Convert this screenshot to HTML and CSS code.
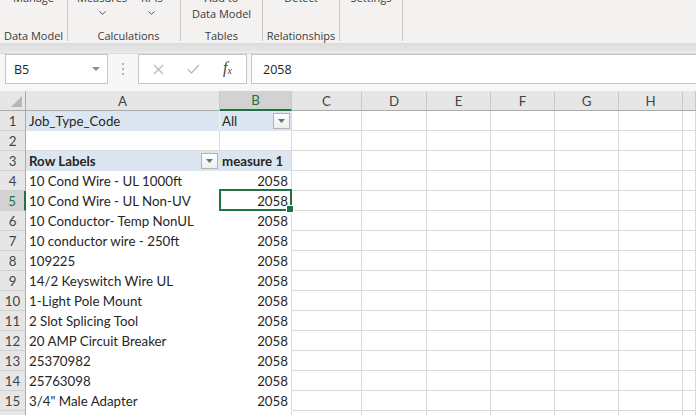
FILE: index.html
```html
<!DOCTYPE html>
<html>
<head>
<meta charset="utf-8">
<link rel="stylesheet" href="styles.css">
</head>
<body>
<div class="ribbon">
  <div class="group g1">
    <div class="btns"><div class="btn"><span>Manage</span></div></div>
    <div class="glabel">Data Model</div>
  </div>
  <div class="group g2">
    <div class="btns">
      <div class="btn"><span>Measures</span><svg class="chev" width="7" height="4" viewBox="0 0 7 4"><path d="M0.5 0.5 L3.5 3.3 L6.5 0.5" fill="none" stroke="#555" stroke-width="1"/></svg></div>
      <div class="btn"><span>KPIs</span><svg class="chev" width="7" height="4" viewBox="0 0 7 4"><path d="M0.5 0.5 L3.5 3.3 L6.5 0.5" fill="none" stroke="#555" stroke-width="1"/></svg></div>
    </div>
    <div class="glabel">Calculations</div>
  </div>
  <div class="group g3">
    <div class="btns"><div class="btn"><span>Add to</span><span>Data Model</span></div></div>
    <div class="glabel">Tables</div>
  </div>
  <div class="group g4">
    <div class="btns"><div class="btn"><span>Detect</span></div></div>
    <div class="glabel">Relationships</div>
  </div>
  <div class="group g5">
    <div class="btns"><div class="btn"><span>Settings</span></div></div>
    <div class="glabel"></div>
  </div>
</div>
<div class="strip"></div>
<div class="fbar">
  <div class="namebox">
    <span>B5</span>
    <svg width="8" height="4" viewBox="0 0 8 4"><path d="M0 0 H8 L4 4 Z" fill="#8a8a8a"/></svg>
  </div>
  <div class="dots"><i></i><i></i><i></i></div>
  <div class="fxbox">
    <svg width="11" height="11" viewBox="0 0 11 11"><path d="M1 1 L10 10 M10 1 L1 10" stroke="#b9b9b9" stroke-width="1.3" fill="none"/></svg>
    <svg width="13" height="10" viewBox="0 0 13 10"><path d="M1 5.5 L4.5 9 L12 1" stroke="#b9b9b9" stroke-width="1.3" fill="none"/></svg>
    <span class="fx">f<sub>x</sub></span>
  </div>
  <div class="finput">2058</div>
</div>
<div class="sheet">
  <div class="row hdr">
    <div class="corner"><svg width="11" height="11" viewBox="0 0 11 11"><path d="M11 0 V11 H0 Z" fill="#b7b7b7"/></svg></div>
    <div class="ch">A</div><div class="ch sel-h">B</div><div class="ch">C</div><div class="ch">D</div><div class="ch">E</div><div class="ch">F</div><div class="ch">G</div><div class="ch">H</div><div class="ch"></div>
  </div>
  <div class="row">
    <div class="rh">1</div><div class="c pv pv-a1">Job_Type_Code</div><div class="c pv pv-b1">All<span class="dd"><svg width="7" height="4" viewBox="0 0 7 4"><path d="M0 0 H7 L3.5 4 Z" fill="#6f6f6f"/></svg></span></div>
    <div class="c"></div><div class="c"></div><div class="c"></div><div class="c"></div><div class="c"></div><div class="c"></div><div class="c"></div>
  </div>
  <div class="row">
    <div class="rh">2</div><div class="c"></div><div class="c"></div>
    <div class="c"></div><div class="c"></div><div class="c"></div><div class="c"></div><div class="c"></div><div class="c"></div><div class="c"></div>
  </div>
  <div class="row">
    <div class="rh">3</div><div class="c pv pv-a3 b">Row Labels<span class="dd"><svg width="7" height="4" viewBox="0 0 7 4"><path d="M0 0 H7 L3.5 4 Z" fill="#6f6f6f"/></svg></span></div><div class="c pv pv-b3 b">measure 1</div>
    <div class="c"></div><div class="c"></div><div class="c"></div><div class="c"></div><div class="c"></div><div class="c"></div><div class="c"></div>
  </div>
  <div class="row">
    <div class="rh">4</div><div class="c pa">10 Cond Wire - UL 1000ft</div><div class="c pb">2058</div>
    <div class="c"></div><div class="c"></div><div class="c"></div><div class="c"></div><div class="c"></div><div class="c"></div><div class="c"></div>
  </div>
  <div class="row">
    <div class="rh sel-r">5</div><div class="c pa">10 Cond Wire - UL Non-UV</div><div class="c pb active">2058</div>
    <div class="c"></div><div class="c"></div><div class="c"></div><div class="c"></div><div class="c"></div><div class="c"></div><div class="c"></div>
  </div>
  <div class="row">
    <div class="rh">6</div><div class="c pa">10 Conductor- Temp NonUL</div><div class="c pb">2058</div>
    <div class="c"></div><div class="c"></div><div class="c"></div><div class="c"></div><div class="c"></div><div class="c"></div><div class="c"></div>
  </div>
  <div class="row">
    <div class="rh">7</div><div class="c pa">10 conductor wire - 250ft</div><div class="c pb">2058</div>
    <div class="c"></div><div class="c"></div><div class="c"></div><div class="c"></div><div class="c"></div><div class="c"></div><div class="c"></div>
  </div>
  <div class="row">
    <div class="rh">8</div><div class="c pa">109225</div><div class="c pb">2058</div>
    <div class="c"></div><div class="c"></div><div class="c"></div><div class="c"></div><div class="c"></div><div class="c"></div><div class="c"></div>
  </div>
  <div class="row">
    <div class="rh">9</div><div class="c pa">14/2 Keyswitch Wire UL</div><div class="c pb">2058</div>
    <div class="c"></div><div class="c"></div><div class="c"></div><div class="c"></div><div class="c"></div><div class="c"></div><div class="c"></div>
  </div>
  <div class="row">
    <div class="rh">10</div><div class="c pa">1-Light Pole Mount</div><div class="c pb">2058</div>
    <div class="c"></div><div class="c"></div><div class="c"></div><div class="c"></div><div class="c"></div><div class="c"></div><div class="c"></div>
  </div>
  <div class="row">
    <div class="rh">11</div><div class="c pa">2 Slot Splicing Tool</div><div class="c pb">2058</div>
    <div class="c"></div><div class="c"></div><div class="c"></div><div class="c"></div><div class="c"></div><div class="c"></div><div class="c"></div>
  </div>
  <div class="row">
    <div class="rh">12</div><div class="c pa">20 AMP Circuit Breaker</div><div class="c pb">2058</div>
    <div class="c"></div><div class="c"></div><div class="c"></div><div class="c"></div><div class="c"></div><div class="c"></div><div class="c"></div>
  </div>
  <div class="row">
    <div class="rh">13</div><div class="c pa">25370982</div><div class="c pb">2058</div>
    <div class="c"></div><div class="c"></div><div class="c"></div><div class="c"></div><div class="c"></div><div class="c"></div><div class="c"></div>
  </div>
  <div class="row">
    <div class="rh">14</div><div class="c pa">25763098</div><div class="c pb">2058</div>
    <div class="c"></div><div class="c"></div><div class="c"></div><div class="c"></div><div class="c"></div><div class="c"></div><div class="c"></div>
  </div>
  <div class="row">
    <div class="rh">15</div><div class="c pa">3/4" Male Adapter</div><div class="c pb">2058</div>
    <div class="c"></div><div class="c"></div><div class="c"></div><div class="c"></div><div class="c"></div><div class="c"></div><div class="c"></div>
  </div>
  <div class="row">
    <div class="rh">16</div><div class="c pa"></div><div class="c pb"></div>
    <div class="c"></div><div class="c"></div><div class="c"></div><div class="c"></div><div class="c"></div><div class="c"></div><div class="c"></div>
  </div>
</div>
</body>
</html>
```
FILE: styles.css
```css
* { box-sizing: border-box; margin: 0; padding: 0; }
html, body { width: 696px; height: 415px; overflow: hidden; background: #ffffff; }
body { font-family: "Open Sans", "Noto Sans", sans-serif; color: #262626; }

/* Ribbon */
.ribbon {
  height: 43px;
  background: #f3f2f1;
  display: flex;
  overflow: hidden;
  font-size: 11px;
  color: #3b3a39;
}
.group {
  display: flex;
  flex-direction: column;
  justify-content: space-between;
  align-items: center;
  height: 51px;
  margin-top: -10px;
  border-right: 1px solid #c8c6c4;
}
.g1 { width: 68px; }
.g2 { width: 113px; padding-left: 9px; align-items: flex-start; }
.g3 { width: 82px; }
.g4 { width: 77px; }
.g5 { width: 63px; }
.btns { display: flex; gap: 14px; }
.btn { display: flex; flex-direction: column; align-items: center; line-height: 16px; }
.chev { margin-top: 5px; }
.glabel { line-height: 16px; height: 16px; margin-bottom: -3px; }
.g2 .glabel { align-self: center; }

.strip {
  height: 11px;
  background: linear-gradient(#dcdcdc, #e6e6e6 8px, #efefef 10px);
  border-bottom: 1px solid #d9d9d9;
}

/* Formula bar */
.fbar {
  height: 37px;
  background: #f7f7f7;
  display: flex;
  align-items: flex-start;
  font-size: 12.5px;
  color: #262626;
}
.namebox {
  margin-left: 5px;
  width: 103px;
  height: 30px;
  background: #fff;
  border: 1px solid #c6c6c6;
  display: flex;
  align-items: center;
  justify-content: space-between;
  padding: 0 7px 0 8px;
}
.dots {
  width: 30px;
  height: 30px;
  display: flex;
  flex-direction: column;
  align-items: center;
  justify-content: center;
  gap: 3px;
}
.dots i { width: 2px; height: 2px; background: #b3b3b3; display: block; }
.fxbox {
  width: 109px;
  height: 30px;
  background: #fff;
  border: 1px solid #c6c6c6;
  display: flex;
  align-items: center;
  padding-left: 14px;
  gap: 23px;
}
.fx { font-family: "Liberation Serif", serif; font-style: italic; font-size: 16px; color: #444; line-height: 16px; }
.fx sub { font-size: 10px; vertical-align: -1px; }
.finput {
  margin-left: 4px;
  flex: 1;
  height: 30px;
  background: #fff;
  border: 1px solid #c6c6c6;
  border-right: none;
  display: flex;
  align-items: center;
  padding-left: 11px;
}

/* Sheet */
.sheet { font-family: "Lato", "Liberation Sans", sans-serif; font-size: 13.3px; }
.row {
  display: grid;
  grid-template-columns: 26px 194px 72px 70px 65px 64px 64px 64px 64px 13px;
  height: 20px;
}
.hdr .ch, .corner {
  background: #e6e6e6;
  border-right: 1px solid #c9c9c9;
  border-bottom: 1px solid #ababab;
  display: flex;
  align-items: center;
  justify-content: center;
  color: #444;
}
.corner { justify-content: flex-end; align-items: flex-end; padding: 0 3px 3px 0; border-right-color: #ababab; }
.ch.sel-h { background: #d2d2d2; border-bottom: 2px solid #217346; color: #217346; }
.rh {
  background: #e6e6e6;
  border-right: 1px solid #ababab;
  border-bottom: 1px solid #d0d0d0;
  display: flex;
  align-items: center;
  justify-content: center;
  color: #444;
}
.rh.sel-r { background: #d2d2d2; border-right: 2px solid #217346; color: #217346; }
.c {
  border-right: 1px solid #dadada;
  border-bottom: 1px solid #dadada;
  display: flex;
  align-items: center;
  padding-left: 3px;
  white-space: nowrap;
  overflow: visible;
}
.pv { background: #dce6f1; border-bottom-color: #dce6f1; justify-content: space-between; padding-right: 1px; }
.pv-a1 { border-right-color: #eef2f8; }
.pv-b1 { padding-left: 2px; }
.pv-a3 { border-right-color: #dce6f1; }
.pv-b3 { padding-left: 2px; }
.b { font-weight: 700; }
.pa { border-right-color: #ffffff; border-bottom-color: #ffffff; }
.pb { border-bottom-color: #ffffff; justify-content: flex-end; padding-right: 3px; }
.dd {
  width: 17px;
  height: 16px;
  border: 1px solid #b3b3b3;
  background: linear-gradient(#ffffff, #eeeeee);
  display: flex;
  align-items: center;
  justify-content: center;
}
.active { position: relative; }
.active::after {
  content: "";
  position: absolute;
  left: -1px; top: -2px; right: -1px; bottom: -1px;
  border: 2px solid #217346;
}
.active::before {
  content: "";
  position: absolute;
  right: -3px; bottom: -3px;
  width: 6px; height: 6px;
  background: #217346;
  border: 1px solid #fff;
  z-index: 2;
}
```
